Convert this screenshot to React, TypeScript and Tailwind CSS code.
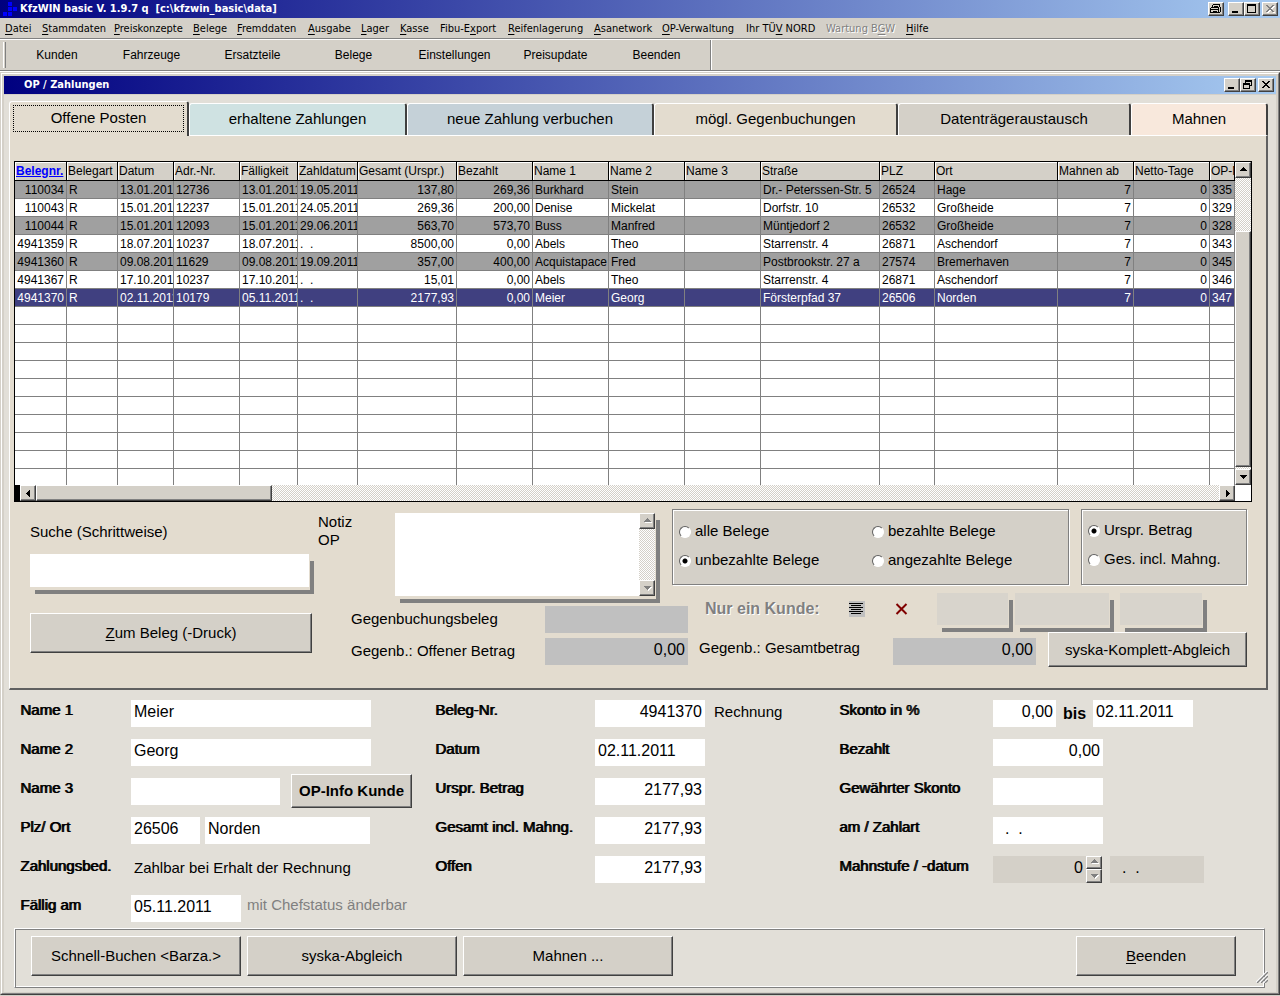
import React, { useState } from "react";
import clsx from "clsx";

type Align = "left" | "right";

interface Column {
  title: string;
  width: string;
  align?: Align;
}

const MENU: { label: string; width: string; disabled?: boolean }[] = [
  { label: "&Datei", width: "w-[37px]" },
  { label: "&Stammdaten", width: "w-[72px]" },
  { label: "&Preiskonzepte", width: "w-[79px]" },
  { label: "&Belege", width: "w-[44px]" },
  { label: "&Fremddaten", width: "w-[71px]" },
  { label: "&Ausgabe", width: "w-[53px]" },
  { label: "&Lager", width: "w-[39px]" },
  { label: "&Kasse", width: "w-[40px]" },
  { label: "Fibu-E&xport", width: "w-[68px]" },
  { label: "&Reifenlagerung", width: "w-[86px]" },
  { label: "&Asanetwork", width: "w-[68px]" },
  { label: "&OP-Verwaltung", width: "w-[84px]" },
  { label: "Ihr TÜ&V NORD", width: "w-[80px]" },
  { label: "Wartung B&GW", width: "w-[80px]", disabled: true },
  { label: "&Hilfe", width: "w-[37px]" },
];

const TOOLBAR = [
  "Kunden",
  "Fahrzeuge",
  "Ersatzteile",
  "Belege",
  "Einstellungen",
  "Preisupdate",
  "Beenden",
];

const TABS = [
  { label: "erhaltene Zahlungen", style: "w-[218px] bg-[#cfe2e2]" },
  { label: "neue Zahlung verbuchen", style: "w-[247px] bg-[#c5d1d8]" },
  { label: "mögl. Gegenbuchungen", style: "w-[244px] bg-[#e3dccf]" },
  { label: "Datenträgeraustausch", style: "w-[233px] bg-[#d4d0c8]" },
  { label: "Mahnen", style: "flex-1 bg-[#f8e8dc]" },
];

const COLUMNS: Column[] = [
  { title: "Belegnr.", width: "w-[52px]", align: "right" },
  { title: "Belegart", width: "w-[51px]" },
  { title: "Datum", width: "w-[56px]" },
  { title: "Adr.-Nr.", width: "w-[66px]" },
  { title: "Fälligkeit", width: "w-[58px]" },
  { title: "Zahldatum", width: "w-[60px]" },
  { title: "Gesamt (Urspr.)", width: "w-[99px]", align: "right" },
  { title: "Bezahlt", width: "w-[76px]", align: "right" },
  { title: "Name 1", width: "w-[76px]" },
  { title: "Name 2", width: "w-[76px]" },
  { title: "Name 3", width: "w-[76px]" },
  { title: "Straße", width: "w-[119px]" },
  { title: "PLZ", width: "w-[55px]" },
  { title: "Ort", width: "w-[123px]" },
  { title: "Mahnen ab", width: "w-[76px]", align: "right" },
  { title: "Netto-Tage", width: "w-[76px]", align: "right" },
  { title: "OP-Nr.", width: "w-auto" },
];

const ROWS: string[][] = [
  ["110034", "R", "13.01.2011", "12736", "13.01.2011", "19.05.2011", "137,80", "269,36", "Burkhard", "Stein", "", "Dr.- Peterssen-Str. 5", "26524", "Hage", "7", "0", "335"],
  ["110043", "R", "15.01.2011", "12237", "15.01.2011", "24.05.2011", "269,36", "200,00", "Denise", "Mickelat", "", "Dorfstr. 10", "26532", "Großheide", "7", "0", "329"],
  ["110044", "R", "15.01.2011", "12093", "15.01.2011", "29.06.2011", "563,70", "573,70", "Buss", "Manfred", "", "Müntjedorf 2", "26532", "Großheide", "7", "0", "328"],
  ["4941359", "R", "18.07.2011", "10237", "18.07.2011", ".  .", "8500,00", "0,00", "Abels", "Theo", "", "Starrenstr. 4", "26871", "Aschendorf", "7", "0", "343"],
  ["4941360", "R", "09.08.2011", "11629", "09.08.2011", "19.09.2011", "357,00", "400,00", "Acquistapace", "Fred", "", "Postbrookstr. 27 a", "27574", "Bremerhaven", "7", "0", "345"],
  ["4941367", "R", "17.10.2011", "10237", "17.10.2011", ".  .", "15,01", "0,00", "Abels", "Theo", "", "Starrenstr. 4", "26871", "Aschendorf", "7", "0", "346"],
  ["4941370", "R", "02.11.2011", "10179", "05.11.2011", ".  .", "2177,93", "0,00", "Meier", "Georg", "", "Försterpfad 37", "26506", "Norden", "7", "0", "347"],
];

const EMPTY_ROWS = 10;

// classic 3D edge, shared by every button and scrollbar part
const RAISED =
  "border border-t-white border-l-white border-r-[#404040] border-b-[#404040] bg-[#d4d0c8] shadow-[inset_-1px_-1px_0_#808080]";
const TRACK =
  "bg-[repeating-conic-gradient(#ffffff_0_25%,#d4d0c8_0_50%)] bg-[length:2px_2px]";
const MENU_FONT = "font-['DejaVu_Sans_Condensed','DejaVu_Sans',sans-serif]";

// "&" marks the underlined shortcut letter
function Mnemonic({ text }: { text: string }) {
  const i = text.indexOf("&");
  if (i < 0) return <>{text}</>;
  return (
    <>
      {text.slice(0, i)}
      <span className="underline underline-offset-2">{text[i + 1]}</span>
      {text.slice(i + 2)}
    </>
  );
}

const ARROWS = {
  up: "M4 1h1v1h1v1h1v1h1v1H1V4h1V3h1V2h1z",
  down: "M1 2h7v1H7v1H6v1H5v1H4V5H3V4H2V3H1z",
  left: "M5 1h1v7H5V7H4V6H3V5H2V4h1V3h1V2h1z",
  right: "M3 1h1v1h1v1h1v1h1v1H6v1H5v1H4v1H3z",
};

function ArrowButton({
  dir,
  className = "h-4 w-4",
  disabled = false,
}: {
  dir: keyof typeof ARROWS;
  className?: string;
  disabled?: boolean;
}) {
  return (
    <button
      aria-label={dir}
      disabled={disabled}
      className={clsx(RAISED, "flex shrink-0 items-center justify-center", className)}
    >
      <svg width="9" height="9" viewBox="0 0 9 9" shapeRendering="crispEdges">
        {disabled && <path d={ARROWS[dir]} fill="#fff" transform="translate(1 1)" />}
        <path d={ARROWS[dir]} fill={disabled ? "#808080" : "#000"} />
      </svg>
    </button>
  );
}

function CaptionButton({ label, children }: { label: string; children: React.ReactNode }) {
  return (
    <button aria-label={label} className={clsx(RAISED, "h-[14px] w-4")}>
      <svg width="14" height="12" viewBox="0 0 14 12" shapeRendering="crispEdges">
        {children}
      </svg>
    </button>
  );
}

const CLOSE_PATH =
  "M3 2h2v1h1v1h2v-1h1v-1h2v1h-1v1h-1v1h-1v1h1v1h1v1h1v1h-2v-1h-1v-1h-2v1h-1v1h-2v-1h1v-1h1v-1h1v-1h-1v-1h-1v-1h-1z";

function PushButton({ text, className }: { text: string; className: string }) {
  return (
    <button className={clsx(RAISED, "text-[15px] leading-5", className)}>
      <Mnemonic text={text} />
    </button>
  );
}

function Field({
  id,
  value = "",
  width,
  align = "left",
  tone = "bg-white",
  label,
}: {
  id?: string;
  value?: string;
  width: string;
  align?: Align;
  tone?: string;
  label?: string;
}) {
  return (
    <input
      id={id}
      aria-label={label}
      type="text"
      defaultValue={value}
      className={clsx(
        "h-[27px] shrink-0 px-[3px] pb-1 text-base whitespace-pre outline-none",
        width,
        tone,
        align === "right" && "text-right"
      )}
    />
  );
}

function FormRow({
  label,
  htmlFor,
  labelWidth,
  children,
}: {
  label: string;
  htmlFor?: string;
  labelWidth: string;
  children: React.ReactNode;
}) {
  return (
    <div className="flex h-[27px] items-start">
      <label
        htmlFor={htmlFor}
        className={clsx("shrink-0 text-[15px] leading-5 [text-shadow:1px_0_0_#000]", labelWidth)}
      >
        {label}
      </label>
      {children}
    </div>
  );
}

function Radio({
  name,
  label,
  checked,
  onChange,
}: {
  name: string;
  label: string;
  checked: boolean;
  onChange: () => void;
}) {
  return (
    <label className="flex h-[29px] items-center gap-1 text-[15px] whitespace-nowrap">
      <input
        type="radio"
        name={name}
        checked={checked}
        onChange={onChange}
        className="h-3 w-3 appearance-none rounded-full border border-t-[#606060] border-r-white border-b-white border-l-[#606060] bg-white checked:bg-[radial-gradient(circle,#000_0_2px,#fff_3px)]"
      />
      {label}
    </label>
  );
}

function PostenTable() {
  return (
    <div className="border border-black bg-white">
      <div className="flex h-[323px]">
        <div className="min-w-0 flex-1 overflow-hidden">
          <table className="w-full min-w-[1220px] table-fixed border-separate border-spacing-0 text-xs leading-4">
            <thead>
              <tr>
                {COLUMNS.map((c, i) => (
                  <th
                    key={c.title}
                    className={clsx(
                      "h-[19px] overflow-hidden border-r border-b border-black bg-[#d4d0c8] p-0 pl-px text-left whitespace-nowrap shadow-[inset_1px_1px_0_#fff]",
                      c.width,
                      i === 0 ? "font-bold text-[#0000ff] underline" : "font-normal"
                    )}
                  >
                    {c.title}
                  </th>
                ))}
              </tr>
            </thead>
            <tbody>
              {ROWS.map((row, r) => (
                <tr
                  key={row[0]}
                  className={clsx(
                    r === ROWS.length - 1
                      ? "bg-[#404080] text-white"
                      : r % 2 === 0
                        ? "bg-[#a0a0a0]"
                        : "bg-white"
                  )}
                >
                  {row.map((cell, i) => (
                    <td
                      key={i}
                      className={clsx(
                        "h-[18px] overflow-hidden border-r border-b border-[#808080] p-0 whitespace-pre",
                        COLUMNS[i].align === "right" ? "pr-0.5 text-right" : "pl-0.5"
                      )}
                    >
                      {cell}
                    </td>
                  ))}
                </tr>
              ))}
              {Array.from({ length: EMPTY_ROWS }, (_, r) => (
                <tr key={r}>
                  {COLUMNS.map((c) => (
                    <td key={c.title} className="h-[18px] border-r border-b border-[#808080] p-0" />
                  ))}
                </tr>
              ))}
            </tbody>
          </table>
        </div>
        <div className={clsx("flex w-4 flex-col", TRACK)}>
          <ArrowButton dir="up" />
          <div className="h-[53px]" />
          <div className={clsx(RAISED, "flex-1")} />
          <div className="h-0.5" />
          <ArrowButton dir="down" />
        </div>
      </div>
      <div className="flex h-4">
        <div className="w-[5px] bg-black" />
        <div className={clsx("flex flex-1", TRACK)}>
          <ArrowButton dir="left" />
          <div className={clsx(RAISED, "w-[236px]")} />
          <div className="flex-1" />
          <ArrowButton dir="right" />
        </div>
        <div className="w-4 bg-white" />
      </div>
    </div>
  );
}

const GROUP =
  "border border-[#808080] bg-[#d4d0c8] shadow-[1px_1px_0_#fff,inset_1px_1px_0_#fff]";
const DROP = "shadow-[1px_3px_0_#e3dccf,5px_7px_0_#808080]";

function FilterArea() {
  const [filter, setFilter] = useState("unbezahlte Belege");
  const [amount, setAmount] = useState("Urspr. Betrag");

  return (
    <div className="flex gap-1.5 pb-[21px] pl-4">
      <div className="flex w-[282px] shrink-0 flex-col pt-5">
        <label htmlFor="suche" className="text-[15px] leading-5">
          Suche (Schrittweise)
        </label>
        <input
          id="suche"
          type="text"
          className={clsx("mt-3 h-[33px] w-[279px] bg-white px-1 text-base outline-none", DROP)}
        />
        <PushButton text="&Zum Beleg (-Druck)" className="mt-[26px] h-10" />
      </div>

      <div className="flex-1 pt-[7px]">
        <div className="flex items-start">
          <label htmlFor="notiz" className="mt-1 w-[77px] text-[15px] leading-[18px]">
            Notiz
            <br />
            OP
          </label>
          <div className={clsx("mt-1 flex h-[83px] w-[260px] bg-white", DROP)}>
            <textarea id="notiz" className="min-w-0 flex-1 resize-none p-1 text-base outline-none" />
            <div className={clsx("flex flex-col justify-between", TRACK)}>
              <ArrowButton dir="up" disabled />
              <ArrowButton dir="down" disabled />
            </div>
          </div>
          <fieldset
            className={clsx(GROUP, "ml-[17px] grid h-[76px] w-[397px] grid-cols-[193px_1fr] content-start pt-[7px] pl-1.5")}
          >
            {["alle Belege", "bezahlte Belege", "unbezahlte Belege", "angezahlte Belege"].map((l) => (
              <Radio key={l} name="filter" label={l} checked={filter === l} onChange={() => setFilter(l)} />
            ))}
          </fieldset>
          <fieldset className={clsx(GROUP, "ml-3 h-[76px] w-[166px] pt-1.5 pl-1.5")}>
            {["Urspr. Betrag", "Ges. incl. Mahng."].map((l) => (
              <Radio key={l} name="amount" label={l} checked={amount === l} onChange={() => setAmount(l)} />
            ))}
          </fieldset>
        </div>

        <div className="-mt-[3px] flex h-10 items-start pl-[33px]">
          <label htmlFor="gegenbeleg" className="mt-4 w-[194px] text-[15px] leading-5">
            Gegenbuchungsbeleg
          </label>
          <div className="mt-[13px] flex">
            <Field id="gegenbeleg" width="w-[143px]" tone="bg-[#c0c0c0]" />
          </div>
          <span className="mt-1.5 ml-[17px] w-[144px] text-base leading-5 font-bold text-[#808080] [text-shadow:1px_1px_0_#fff]">
            Nur ein Kunde:
          </span>
          <button aria-label="Kunde wählen" className="mt-2 bg-[#c0c0c0]">
            <svg width="16" height="16" viewBox="0 0 16 16" shapeRendering="crispEdges">
              <path
                d="M0 2h14v1H0zM2 4h10v1H2zM0 6h14v1H0zM2 8h10v1H2zM0 10h14v1H0zM2 12h10v1H2z"
                fill="#000"
              />
            </svg>
          </button>
          <button aria-label="Auswahl löschen" className="mt-2.5 ml-[30px]">
            <svg width="13" height="12" viewBox="0 0 13 12">
              <path d="M1.5 1l10 10M11.5 1l-10 10" stroke="#800000" strokeWidth="2" />
            </svg>
          </button>
          <div className={clsx("ml-[29px] h-8 w-[71px] bg-[#d8d4cc]", DROP)} />
          <div className={clsx("ml-[7px] h-8 w-[94px] bg-[#d8d4cc]", DROP)} />
          <div className={clsx("ml-[11px] h-8 w-[82px] bg-[#d8d4cc]", DROP)} />
        </div>

        <div className="-mt-px flex items-start pl-[33px]">
          <label htmlFor="offenerbetrag" className="mt-[9px] w-[194px] text-[15px] leading-5">
            Gegenb.: Offener Betrag
          </label>
          <div className="mt-1.5 flex">
            <Field id="offenerbetrag" value="0,00" width="w-[143px]" align="right" tone="bg-[#c0c0c0]" />
          </div>
          <label htmlFor="gesamtbetrag" className="mt-1.5 ml-[11px] w-[194px] text-[15px] leading-5">
            Gegenb.: Gesamtbetrag
          </label>
          <div className="mt-1.5 flex">
            <Field id="gesamtbetrag" value="0,00" width="w-[143px]" align="right" tone="bg-[#c0c0c0]" />
          </div>
          <PushButton text="syska-Komplett-Abgleich" className="ml-3 h-[35px] w-[199px]" />
        </div>
      </div>
    </div>
  );
}

function DetailForm() {
  const left = "w-[111px]";
  const mid = "w-[160px]";
  const right = "w-[154px]";

  return (
    <div className="grid grid-cols-[415px_404px_1fr] pt-[10px] pl-[11px]">
      <div className="flex flex-col gap-3">
        <FormRow label="Name 1" htmlFor="name1" labelWidth={left}>
          <Field id="name1" value="Meier" width="w-[240px]" />
        </FormRow>
        <FormRow label="Name 2" htmlFor="name2" labelWidth={left}>
          <Field id="name2" value="Georg" width="w-[240px]" />
        </FormRow>
        <FormRow label="Name 3" htmlFor="name3" labelWidth={left}>
          <Field id="name3" width="w-[149px]" />
          <PushButton text="OP-Info Kunde" className="-mt-1 ml-[11px] h-[34px] w-[121px] font-bold" />
        </FormRow>
        <FormRow label="Plz/ Ort" htmlFor="plz" labelWidth={left}>
          <Field id="plz" value="26506" width="w-[69px]" />
          <div className="w-[5px]" />
          <Field label="Ort" value="Norden" width="w-[165px]" />
        </FormRow>
        <FormRow label="Zahlungsbed." labelWidth={left}>
          <span className="pl-[3px] text-[15px] leading-6">Zahlbar bei Erhalt der Rechnung</span>
        </FormRow>
        <FormRow label="Fällig am" htmlFor="faellig" labelWidth={left}>
          <Field id="faellig" value="05.11.2011" width="w-[110px]" />
          <span className="pl-1.5 text-[15px] leading-5 whitespace-nowrap text-[#808080]">
            mit Chefstatus änderbar
          </span>
        </FormRow>
      </div>

      <div className="flex flex-col gap-3">
        <FormRow label="Beleg-Nr." htmlFor="belegnr" labelWidth={mid}>
          <Field id="belegnr" value="4941370" width="w-[110px]" align="right" />
          <span className="pl-[9px] text-[15px] leading-6">Rechnung</span>
        </FormRow>
        <FormRow label="Datum" htmlFor="datum" labelWidth={mid}>
          <Field id="datum" value="02.11.2011" width="w-[110px]" />
        </FormRow>
        <FormRow label="Urspr. Betrag" htmlFor="urspr" labelWidth={mid}>
          <Field id="urspr" value="2177,93" width="w-[110px]" align="right" />
        </FormRow>
        <FormRow label="Gesamt incl. Mahng." htmlFor="gesamt" labelWidth={mid}>
          <Field id="gesamt" value="2177,93" width="w-[110px]" align="right" />
        </FormRow>
        <FormRow label="Offen" htmlFor="offen" labelWidth={mid}>
          <Field id="offen" value="2177,93" width="w-[110px]" align="right" />
        </FormRow>
      </div>

      <div className="flex flex-col gap-3">
        <FormRow label="Skonto in %" htmlFor="skonto" labelWidth={right}>
          <Field id="skonto" value="0,00" width="w-[63px]" align="right" />
          <label htmlFor="skontobis" className="w-[37px] text-center text-base leading-7 font-bold">
            bis
          </label>
          <Field id="skontobis" value="02.11.2011" width="w-[100px]" />
        </FormRow>
        <FormRow label="Bezahlt" htmlFor="bezahlt" labelWidth={right}>
          <Field id="bezahlt" value="0,00" width="w-[110px]" align="right" />
        </FormRow>
        <FormRow label="Gewährter Skonto" htmlFor="gewskonto" labelWidth={right}>
          <Field id="gewskonto" width="w-[110px]" />
        </FormRow>
        <FormRow label="am / Zahlart" htmlFor="zahlart" labelWidth={right}>
          <Field id="zahlart" value="  .  ." width="w-[110px]" />
        </FormRow>
        <FormRow label="Mahnstufe / -datum" htmlFor="mahnstufe" labelWidth={right}>
          <Field id="mahnstufe" value="0" width="w-[93px]" align="right" tone="bg-[#d4d0c8]" />
          <div className="flex w-4 flex-col">
            <ArrowButton dir="up" disabled className="h-[13px] w-4" />
            <ArrowButton dir="down" disabled className="h-[14px] w-4" />
          </div>
          <div className="w-2" />
          <Field label="Mahndatum" value="  .  ." width="w-[94px]" tone="bg-[#d4d0c8]" />
        </FormRow>
      </div>
    </div>
  );
}

export default function App() {
  return (
    <div className="flex min-h-screen min-w-[1280px] flex-col bg-[#d4d0c8] font-['Liberation_Sans',Arial,sans-serif] text-black">
      <header
        className={clsx(
          "flex h-[18px] items-center bg-linear-to-r/srgb from-[#000080] to-[#a6caf0] pr-0.5 pl-[3px] text-white",
          MENU_FONT
        )}
      >
        <svg width="14" height="18" viewBox="0 0 14 18" shapeRendering="crispEdges">
          <path d="M5 2h4v4H5zM5 7h4v4H5zM10 7h4v4h-4zM0 12h4v4H0zM5 12h4v4H5z" fill="#0000ff" />
        </svg>
        <h1 className="flex-1 pl-[3px] text-[11px] font-bold whitespace-pre">
          {"KfzWIN basic V. 1.9.7 q  [c:\\kfzwin_basic\\data]"}
        </h1>
        <CaptionButton label="Drucken">
          <path d="M4 1h7v3h1v5h-1v1H1V5h2V3h1z" fill="#d4d0c8" />
          <path
            d="M4 1h7v1H4zM3 2h1v2H3zM10 2h1v2h-1zM5 3h4v1H5zM2 4h8v1H2zM1 5h1v4H1zM11 4h1v5h-1zM2 6h8v1H2zM9 5h1v4H9zM1 9h10v1H1zM4 8h4v1H4z"
            fill="#000"
          />
        </CaptionButton>
        <div className="w-1" />
        <CaptionButton label="Minimieren">
          <path d="M3 8h6v2H3z" fill="#000" />
        </CaptionButton>
        <CaptionButton label="Maximieren">
          <path d="M2 1h9v9H2zM3 3v6h7V3z" fillRule="evenodd" fill="#000" />
        </CaptionButton>
        <div className="w-0.5" />
        <CaptionButton label="Schließen">
          <path d={CLOSE_PATH} fill="#fff" transform="translate(1 1)" />
          <path d={CLOSE_PATH} fill="#808080" />
        </CaptionButton>
      </header>

      <nav
        className={clsx(
          "flex h-[21px] items-center border-b border-[#808080] pt-0.5 pl-[5px] text-[11px] leading-4",
          MENU_FONT
        )}
      >
        {MENU.map((m) => (
          <button
            key={m.label}
            disabled={m.disabled}
            className={clsx(
              "shrink-0 text-left whitespace-nowrap",
              m.width,
              m.disabled && "text-[#808080] [text-shadow:1px_1px_0_#fff]"
            )}
          >
            <Mnemonic text={m.label} />
          </button>
        ))}
      </nav>

      <div className="flex h-8 border-t border-b border-t-white border-b-[#808080]">
        <div className="my-0.5 ml-[3px] w-[3px] border-r border-l border-r-[#808080] border-l-white" />
        <div className="flex border-r border-[#808080] pr-[3px] text-xs">
          {TOOLBAR.map((t, i) => (
            <button key={t} className={clsx("h-full", i === 0 ? "w-[95px] pl-[7px]" : "w-[101px]")}>
              {t}
            </button>
          ))}
        </div>
        <div className="w-px bg-white" />
      </div>
      <div className="h-px bg-white" />

      <main className="mb-px flex flex-1 flex-col border-t border-r border-b border-l border-t-[#d4d0c8] border-r-[#404040] border-b-[#404040] border-l-[#d4d0c8]">
        <div className="flex flex-1 flex-col border border-t-white border-r-[#808080] border-b-[#808080] border-l-white px-0.5 pt-0.5 pb-px">
          <div
            className={clsx(
              "flex h-[18px] items-center bg-linear-to-r/srgb from-[#000080] to-[#a6caf0] pr-0.5 pl-5 text-white",
              MENU_FONT
            )}
          >
            <h2 className="flex-1 text-[11px] font-bold">OP / Zahlungen</h2>
            <CaptionButton label="Fenster minimieren">
              <path d="M3 8h6v2H3z" fill="#000" />
            </CaptionButton>
            <CaptionButton label="Fenster wiederherstellen">
              <path
                d="M4 1h7v6H9V6h1V3H5v1H4zM2 4h7v6H2zM3 6v3h5V6z"
                fillRule="evenodd"
                fill="#000"
              />
            </CaptionButton>
            <div className="w-0.5" />
            <CaptionButton label="Fenster schließen">
              <path d={CLOSE_PATH} fill="#000" />
            </CaptionButton>
          </div>
          <div className="h-px" />

          <div className="flex-1 bg-[#e2dfd8] pt-1.5 pr-2 pb-1 pl-[5px]">
            <div role="tablist" className="flex items-end text-[15px]">
              <button
                role="tab"
                aria-selected="true"
                className="relative -mb-px h-[35px] w-[180px] rounded-t-[3px] border-t border-r-2 border-l border-t-white border-r-[#404040] border-l-white bg-[#e3dccf] px-[3px] pt-[3px] pb-1"
              >
                <span className="flex h-full items-center justify-center border border-dotted border-black">
                  Offene Posten
                </span>
              </button>
              {TABS.map((t) => (
                <button
                  key={t.label}
                  role="tab"
                  aria-selected="false"
                  className={clsx(
                    "h-8 rounded-t-[3px] border-t border-r-2 border-l border-t-white border-r-[#404040] border-l-white whitespace-nowrap",
                    t.style
                  )}
                >
                  {t.label}
                </button>
              ))}
            </div>

            <section className="border-t border-r-2 border-b-2 border-l border-t-white border-r-[#606060] border-b-[#606060] border-l-white bg-[#e3dccf] pt-[25px] pr-3.5 pl-1">
              <PostenTable />
              <FilterArea />
            </section>

            <DetailForm />

            <footer className="relative mt-1.5 mr-[3px] ml-[5px] flex h-[60px] items-center gap-1.5 border border-t-white border-r-[#808080] border-b-[#808080] border-l-white pr-7 pb-1 pl-4 shadow-[inset_1px_1px_0_#808080,inset_-1px_-1px_0_#fff]">
              <PushButton text="Schnell-Buchen <Barza.>" className="h-10 w-[210px]" />
              <PushButton text="syska-Abgleich" className="h-10 w-[210px]" />
              <PushButton text="Mahnen ..." className="h-10 w-[210px]" />
              <PushButton text="&Beenden" className="ml-auto h-10 w-[160px]" />
              <svg
                className="absolute -right-1 bottom-1"
                width="12"
                height="12"
                viewBox="0 0 12 12"
              >
                <path d="M0 12L12 0M4 12l8-8M8 12l4-4" stroke="#fff" strokeWidth="2" />
                <path d="M1 12L12 1M5 12l7-7M9 12l3-3" stroke="#808080" strokeWidth="1.4" />
              </svg>
            </footer>
          </div>
        </div>
      </main>
    </div>
  );
}
